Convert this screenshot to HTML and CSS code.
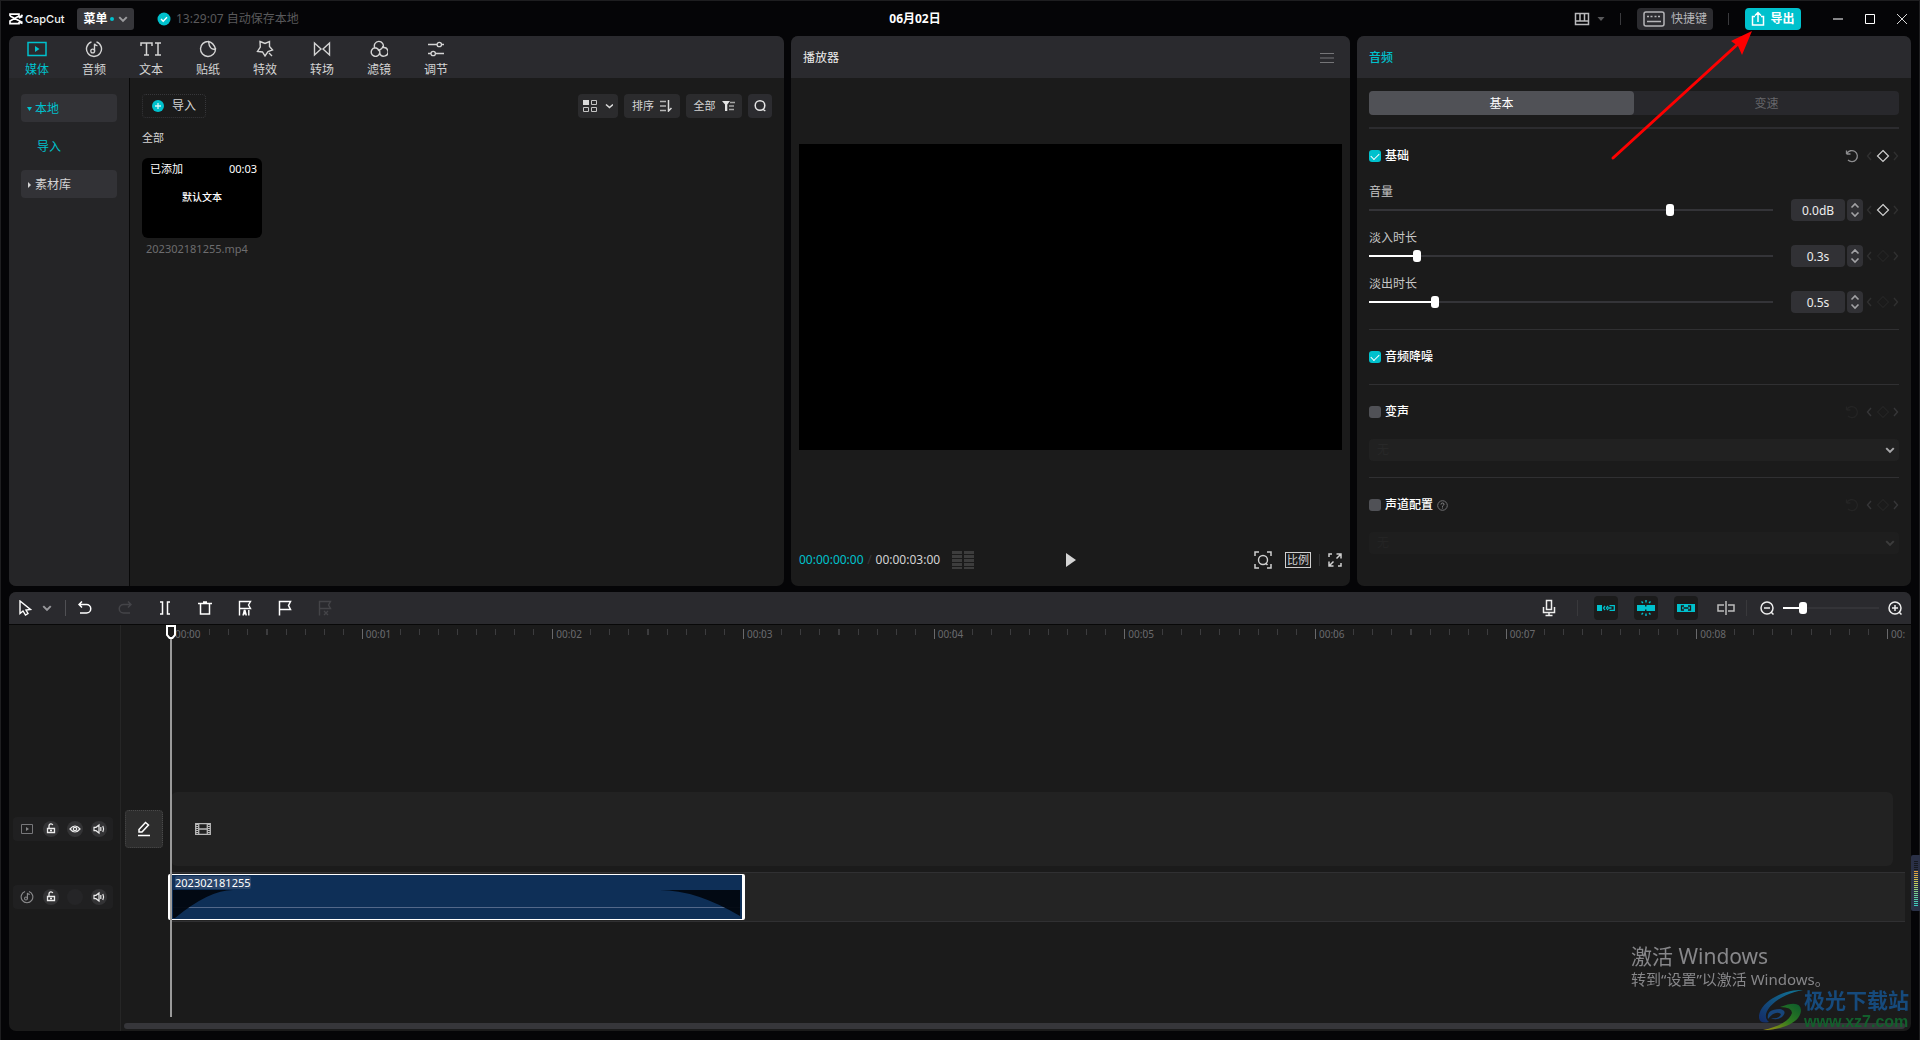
FILE: index.html
```html
<!DOCTYPE html>
<html lang="zh-CN">
<head>
<meta charset="utf-8">
<meta name="viewport" content="width=device-width, initial-scale=1">
<title>CapCut</title>
<link rel="stylesheet" href="styles.css">
</head>
<body>
<svg class="symbols" aria-hidden="true">
  <symbol id="chevron" viewBox="0 0 8 6"><path d="M1 1.5 4 4.5 7 1.5" fill="none" stroke="currentColor" stroke-width="1.6"/></symbol>
  <symbol id="keys" viewBox="0 0 36 16">
    <path class="kf-arrow" d="M8 4 4.500 8 8 12M31 4l3.500 4L31 12" fill="none" stroke-width="1.4"/>
    <path class="kf-diamond" d="M20 2.500 25.500 8 20 13.500 14.500 8Z" fill="none" stroke-width="1.2"/>
  </symbol>
  <symbol id="reset" viewBox="0 0 14 14"><path d="M1.500 5H5.500M1.500 1.500v3.500M2 4.500A5.500 5.500 0 1 1 3 11" fill="none" stroke="currentColor" stroke-width="1.300"/></symbol>
  <symbol id="spin" viewBox="0 0 16 22"><path d="M4.500 8.500 8 5l3.500 3.500M4.500 13.500 8 17l3.500-3.500" fill="none" stroke="#a2a2a5" stroke-width="1.600"/></symbol>
  <symbol id="lock" viewBox="0 0 16 16"><path d="M4.500 7.500h7v4h-7zM6 7.500V4.800a2 2 0 0 1 3.800-.8M7 9.500h2" fill="none" stroke="#ececec" stroke-width="1.300"/></symbol>
  <symbol id="speaker" viewBox="0 0 16 16"><path d="M3 6.300h2L8 4v8L5 9.700H3zM9.800 6v4M11.800 5q1.600 3 0 6" fill="none" stroke="#ececec" stroke-width="1.200"/></symbol>
  <symbol id="note" viewBox="0 0 18 18"><path d="M11.500 1.900A7.500 7.500 0 1 1 6.500 1.900M9.500 11.500V3.800q1 2 3 1.800" fill="none" stroke="currentColor" stroke-width="1.400"/><circle cx="7.700" cy="11" r="1.900" fill="none" stroke="currentColor" stroke-width="1.300"/></symbol>
</svg>

<div class="app">
  <header class="titlebar">
    <div class="title-left">
      <svg class="logo" width="14" height="12" viewBox="0 0 14 12"><path d="M13.500 3.500 10 5 13.500 2M1 3V1.200h9V3L1 8v2.600h9V9M1 3l12.500 6.500M10 9l3.500 1.500" fill="none" stroke="#fff" stroke-width="1.700"/></svg>
      <span class="brand">CapCut</span>
      <button class="menu-btn" type="button">菜单<i class="dot"></i><svg width="10" height="8"><use href="#chevron"/></svg></button>
      <svg class="saved" width="14" height="14" viewBox="0 0 14 14"><circle cx="7" cy="7" r="6.500" fill="#00c1cd"/><path d="M4 7l2.200 2.200L10 5.300" fill="none" stroke="#fff" stroke-width="1.400"/></svg>
      <span class="save-text">13:29:07 自动保存本地</span>
    </div>
    <h1 class="project">06月02日</h1>
    <div class="title-right">
      <button class="layout-btn" type="button" aria-label="布局">
        <svg width="32" height="14" viewBox="0 0 32 14"><path d="M2.500 1.500h13v11h-13zM2.500 9h13M7 2v7M11.500 2v7" fill="none" stroke="#b9b9bb" stroke-width="1.500"/><path d="M24.500 5h7L28 9z" fill="#58585a"/></svg>
      </button>
      <i class="vline"></i>
      <button class="keys-btn" type="button"><svg width="22" height="16" viewBox="0 0 22 16"><rect x="1" y="1" width="20" height="14" rx="2" fill="none" stroke="#b5b5b8" stroke-width="1.500"/><path d="M4 5.500h2m1.500 0h2m2 0h2m1.500 0h2M4 10.500h14" stroke="#b5b5b8" stroke-width="1.500"/></svg>快捷键</button>
      <i class="vline"></i>
      <button class="export-btn" type="button"><svg width="14" height="16" viewBox="0 0 14 16"><path d="M4 5.500H1.500v8.500h11V5.500H10M7 11V2M4 4.500l3-3 3 3" fill="none" stroke="#fff" stroke-width="1.500"/></svg>导出</button>
      <div class="win">
        <button type="button" aria-label="最小化"><svg width="12" height="12"><path d="M1 6h10" stroke="#858587" stroke-width="2"/></svg></button>
        <button type="button" aria-label="最大化"><svg width="12" height="12"><path d="M1.500 1.500h9v9h-9z" fill="none" stroke="#fff"/></svg></button>
        <button type="button" aria-label="关闭"><svg width="12" height="12"><path d="M1 1l10 10M11 1 1 11" stroke="#d8d8d8"/></svg></button>
      </div>
    </div>
  </header>

  <main class="panels">
    <section class="panel media">
      <nav class="panel-head tabs">
        <button class="tab on" type="button"><svg width="20" height="18" viewBox="0 0 20 18"><path d="M1 2.500h18v13H1z" fill="none" stroke="currentColor" stroke-width="1.500"/><path d="M8 6l4.500 3L8 12z" fill="currentColor"/></svg>媒体</button>
        <button class="tab" type="button"><svg width="18" height="18"><use href="#note"/></svg>音频</button>
        <button class="tab" type="button"><svg width="22" height="18" viewBox="0 0 22 18"><path d="M1 6V3h11v3M6.500 3v12M4 15h5M15 3h6M15 15h6M18 3v12" fill="none" stroke="currentColor" stroke-width="1.500"/></svg>文本</button>
        <button class="tab" type="button"><svg width="18" height="18" viewBox="0 0 18 18"><path d="M9.500 1.500A7.500 7.500 0 1 0 16.500 9q-6 1.500-7-7.500 5 1 7 7.500" fill="none" stroke="currentColor" stroke-width="1.400"/></svg>贴纸</button>
        <button class="tab" type="button"><svg width="18" height="18" viewBox="0 0 18 18"><path d="M4 1.500l5 2 4.500-2v5l3 3.500-4.500 1.500-3 4.500-2.500-4-5-.5 2.800-4.500zM13 13l3 3" fill="none" stroke="currentColor" stroke-width="1.400"/></svg>特效</button>
        <button class="tab" type="button"><svg width="18" height="18" viewBox="0 0 18 18"><path d="M1.500 3v12L8 9zM16.500 3v12L10 9z" fill="none" stroke="currentColor" stroke-width="1.400"/></svg>转场</button>
        <button class="tab" type="button"><svg width="18" height="18" viewBox="0 0 18 18"><path d="M4.800 7.800A4.500 4.500 0 1 1 13 7.600M13 7.600A4.300 4.300 0 1 1 9.800 13.500M9 9.500A4.300 4.300 0 1 1 4.800 7.800Q8 7.800 9 11M13 6q-.5 3-3.500 4" fill="none" stroke="currentColor" stroke-width="1.400"/></svg>滤镜</button>
        <button class="tab" type="button"><svg width="18" height="18" viewBox="0 0 18 18"><path d="M1 4.500h9M14.500 4.500H17M1 13.500h3M8.500 13.500H17" stroke="currentColor" stroke-width="1.400"/><circle cx="12.300" cy="4.500" r="2.200" fill="none" stroke="currentColor" stroke-width="1.300"/><circle cx="6.200" cy="13.500" r="2.200" fill="none" stroke="currentColor" stroke-width="1.300"/></svg>调节</button>
      </nav>
      <div class="media-body">
        <aside class="side">
          <button class="side-item on" type="button"><svg width="6" height="6"><path d="M0 1h5L2.500 5z" fill="currentColor"/></svg>本地</button>
          <button class="side-sub" type="button">导入</button>
          <button class="side-item" type="button"><svg width="6" height="6"><path d="M1 0v6l3-3z" fill="currentColor"/></svg>素材库</button>
        </aside>
        <div class="library">
          <div class="lib-bar">
            <button class="import-btn" type="button"><svg width="12" height="12"><circle cx="6" cy="6" r="6" fill="#00c1cd"/><path d="M3 6h6M6 3v6" stroke="#d8f6f8" stroke-width="1.300"/></svg>导入</button>
            <div class="filters">
              <button class="chip" type="button" aria-label="视图"><svg width="30" height="14" viewBox="0 0 30 14"><path d="M0 1h6v5H0z" fill="#dadada"/><path d="M8.500 1.500h5v4h-5zM.5 8.500h5v4h-5zM8.500 8.500h5v4h-5z" fill="none" stroke="#c5c5c5"/><path d="M23 5.500l3.500 3 3.500-3" fill="none" stroke="#dadada" stroke-width="1.600"/></svg></button>
              <button class="chip wide" type="button">排序<svg width="12" height="12"><path d="M0 1.500h6M0 6h6M0 10.500h6" stroke="#b5b5b5" stroke-width="1.500"/><path d="M8.500 0v11l3-3" fill="none" stroke="#dadada" stroke-width="1.500"/></svg></button>
              <button class="chip wide" type="button">全部<svg width="13" height="12"><path d="M0 1h8L5.300 4.500V11H3V4.500z" fill="#e4e4e4"/><path d="M8 2.500h5M7 6h5M7 9.500h5" stroke="#a5a5a5" stroke-width="1.500"/></svg></button>
              <button class="chip search" type="button" aria-label="搜索"><svg width="14" height="14"><circle cx="7" cy="6.500" r="4.800" fill="none" stroke="#e4e4e4" stroke-width="1.500"/><path d="M9.500 10l2.800 2" stroke="#e4e4e4" stroke-width="1.500"/></svg></button>
            </div>
          </div>
          <h2 class="lib-title">全部</h2>
          <figure class="clip-card">
            <div class="thumb"><div class="thumb-top"><span>已添加</span><time>00:03</time></div><b>默认文本</b></div>
            <figcaption>202302181255.mp4</figcaption>
          </figure>
        </div>
      </div>
    </section>

    <section class="panel player">
      <div class="panel-head player-head"><h2>播放器</h2><button type="button" aria-label="菜单"><svg width="14" height="12"><path d="M0 1.500h14M0 6h14M0 10.500h14" stroke="#757578"/></svg></button></div>
      <div class="stage"><div class="screen"></div></div>
      <div class="controls">
        <div class="times"><time class="now">00:00:00:00</time><i>/</i><time>00:00:03:00</time>
          <svg width="22" height="18"><path d="M5 0v18M17 0v18" stroke="#3d3d3d" stroke-width="10" stroke-dasharray="3 1"/></svg></div>
        <button type="button" aria-label="播放"><svg width="10" height="14"><path d="M0 0v14l10-7z" fill="#d4d4d4"/></svg></button>
        <div class="view">
          <button type="button" aria-label="缩放"><svg width="18" height="18"><path d="M1 5V1h4M13 1h4v4M17 13v4h-4M5 17H1v-4M11.500 12l2 2" fill="none" stroke="#d0d0d0" stroke-width="1.500"/><circle cx="9" cy="9" r="4.500" fill="none" stroke="#d0d0d0" stroke-width="1.400"/></svg></button>
          <button class="ratio" type="button">比例</button>
          <i class="vline"></i>
          <button type="button" aria-label="全屏"><svg width="14" height="14"><path d="M1 4V1h3M8.500 1H13v4.500M13 10v3h-3M5.500 13H1V8.500M8.500 5.500 13 1M5.500 8.500 1 13" fill="none" stroke="#d0d0d0" stroke-width="1.500"/></svg></button>
        </div>
      </div>
    </section>

    <section class="panel inspector">
      <div class="panel-head"><h2>音频</h2></div>
      <div class="props">
        <div class="segment"><button class="on" type="button">基本</button><button type="button">变速</button></div>
        <section class="group first">
          <div class="row"><label class="check"><input type="checkbox" checked>基础</label>
            <button class="reset" type="button" aria-label="重置"><svg width="14" height="14"><use href="#reset"/></svg></button><svg class="kf active" width="36" height="16"><use href="#keys"/></svg></div>
          <label class="name" for="vol">音量</label>
          <div class="control"><input class="range" id="vol" type="range" min="0" max="1000" value="750"><input class="num" type="text" value="0.0dB" aria-label="音量值"><button class="step" type="button" aria-label="增减"><svg width="16" height="22"><use href="#spin"/></svg></button><svg class="kf active" width="36" height="16"><use href="#keys"/></svg></div>
          <label class="name" for="fin">淡入时长</label>
          <div class="control"><input class="range" id="fin" type="range" min="0" max="1000" value="111" style="--fill:12%"><input class="num" type="text" value="0.3s" aria-label="淡入值"><button class="step" type="button" aria-label="增减"><svg width="16" height="22"><use href="#spin"/></svg></button><svg class="kf" width="36" height="16"><use href="#keys"/></svg></div>
          <label class="name" for="fout">淡出时长</label>
          <div class="control"><input class="range" id="fout" type="range" min="0" max="1000" value="157" style="--fill:16%"><input class="num" type="text" value="0.5s" aria-label="淡出值"><button class="step" type="button" aria-label="增减"><svg width="16" height="22"><use href="#spin"/></svg></button><svg class="kf" width="36" height="16"><use href="#keys"/></svg></div>
        </section>
        <section class="group slim">
          <div class="row"><label class="check"><input type="checkbox" checked>音频降噪</label></div>
        </section>
        <section class="group">
          <div class="row"><label class="check"><input type="checkbox">变声</label><svg class="reset off" width="14" height="14"><use href="#reset"/></svg><svg class="kf dim" width="36" height="16"><use href="#keys"/></svg></div>
          <div class="pick"><select aria-label="变声" disabled><option>无</option></select><svg width="10" height="8"><use href="#chevron"/></svg></div>
        </section>
        <section class="group">
          <div class="row"><label class="check"><input type="checkbox">声道配置</label>
            <svg class="help" width="11" height="11"><circle cx="5.500" cy="5.500" r="4.800" fill="none" stroke="#707072"/><path d="M4 4.500q0-1.500 1.500-1.500T7 4.300Q7 5 5.500 6v.8M5.500 7.500v1" fill="none" stroke="#858587"/></svg>
            <svg class="reset off" width="14" height="14"><use href="#reset"/></svg><svg class="kf dim" width="36" height="16"><use href="#keys"/></svg></div>
          <div class="pick faint"><select aria-label="声道配置" disabled><option>无</option></select><svg width="10" height="8"><use href="#chevron"/></svg></div>
        </section>
      </div>
    </section>
  </main>

  <section class="panel timeline">
    <div class="toolbar">
      <div class="tools">
        <button class="narrow" type="button" aria-label="选择"><svg width="14" height="16"><path d="M2 1v12.500l3-2.500 2.500 4 2.500-1.500-2-3.500 4.500-.5z" fill="none" stroke="#fff" stroke-width="1.400"/></svg></button>
        <button class="caret" type="button" aria-label="更多"><svg width="10" height="8"><use href="#chevron"/></svg></button>
        <i class="vline"></i>
        <button type="button" aria-label="撤销"><svg width="14" height="14"><path d="M4 .5 1 3.500l3 3M1 3.500h7.500a4.200 4.200 0 0 1 0 8.500H2" fill="none" stroke="#fff" stroke-width="1.500"/></svg></button>
        <button class="off" type="button" aria-label="恢复"><svg width="14" height="14"><path d="M10 .5l3 3-3 3M13 3.500H5.500a4.200 4.200 0 0 0 0 8.500H12" fill="none" stroke="currentColor" stroke-width="1.500"/></svg></button>
        <button type="button" aria-label="分割"><svg width="12" height="14"><path d="M1 1h2.500v12H1M11 1H8.500v12H11" fill="none" stroke="#fff" stroke-width="1.500"/></svg></button>
        <button type="button" aria-label="删除"><svg width="14" height="14"><path d="M0 2.500h14M5 1h4M2.500 2.500v10.500h9V2.500" fill="none" stroke="#fff" stroke-width="1.500"/></svg></button>
        <button type="button" aria-label="智能标记"><svg width="14" height="16" viewBox="0 0 14 16"><path d="M1.500 15.500V1.500h11L10.500 5l2 3.500h-11M5 15.500l1.300-5H7l1.300 5M5.500 13.700h2.300M10.800 10v5.500" fill="none" stroke="#fff" stroke-width="1.400"/></svg></button>
        <button type="button" aria-label="标记"><svg width="14" height="16"><path d="M1.500 15.500V1.500h11L10.500 5.500l2 4h-11" fill="none" stroke="#fff" stroke-width="1.500"/></svg></button>
        <button class="off" type="button" aria-label="清除标记"><svg width="14" height="16"><path d="M1.500 15.500V1.500h11L10.500 5l2 3.500h-11M6 11l4 4M10 11l-4 4" fill="none" stroke="currentColor" stroke-width="1.400"/></svg></button>
      </div>
      <div class="tools-right">
        <button type="button" aria-label="录音"><svg width="14" height="18"><path d="M4.500 1.500h5v9h-5zM1.500 8v5.500h11V8M7 13.500V16M3.500 16.500h7" fill="none" stroke="#eee" stroke-width="1.500"/></svg></button>
        <i class="vline"></i>
        <button class="toggle" type="button" aria-label="主轨磁吸"><svg width="18" height="8"><path d="M0 1h5v6H0z" fill="#00c1cd"/><path d="M12.500 1.700h4.800v4.600h-4.800M8 2 6.500 4 8 6M11 2 9.500 4 11 6M11 4h3.500" fill="none" stroke="#00c1cd" stroke-width="1.300"/></svg></button>
        <button class="toggle" type="button" aria-label="自动吸附"><svg width="18" height="18"><path d="M0 6h8v6H0zM9.500 6H18v6H9.500zM8 7.500h2v3H8z" fill="#00c1cd"/><path d="M9 1v2.500M9 14.500V17M4.500 2.500 6 4M13.500 2.500 12 4M4.500 15.500 6 14M13.500 15.500 12 14" stroke="#00c1cd" stroke-width="1.400"/></svg></button>
        <button class="toggle" type="button" aria-label="联动"><svg width="18" height="8"><path d="M0 0h18v8H0z" fill="#00c1cd"/><path d="M7 2H4.500v4H7M11 2h2.500v4H11M6.500 4h5" fill="none" stroke="#1b1b1b" stroke-width="1.300"/></svg></button>
        <button class="preview" type="button" aria-label="预览轴"><svg width="18" height="14"><path d="M7 4H1v6h6M11 4h6v6h-6M9 0v14" fill="none" stroke="#bdbdbd" stroke-width="1.500"/></svg></button>
        <i class="vline"></i>
        <button class="zoom" type="button" aria-label="缩小"><svg width="14" height="14"><circle cx="7" cy="7" r="6" fill="none" stroke="#eee" stroke-width="1.500"/><path d="M4 7h6M11 11l2.500 2.500" stroke="#eee" stroke-width="1.500"/></svg></button>
        <input class="range zoom-range" type="range" min="0" max="1000" value="182" style="--fill:20%" aria-label="时间线缩放">
        <button class="zoom" type="button" aria-label="放大"><svg width="14" height="14"><circle cx="7" cy="7" r="6" fill="none" stroke="#eee" stroke-width="1.500"/><path d="M4 7h6M7 4v6M11 11l2.500 2.500" stroke="#eee" stroke-width="1.500"/></svg></button>
      </div>
    </div>
    <div class="tracks">
      <div class="gutter"></div>
      <div class="ruler"><span>00:00</span><span>00:01</span><span>00:02</span><span>00:03</span><span>00:04</span><span>00:05</span><span>00:06</span><span>00:07</span><span>00:08</span><span>00:</span></div>
      <div class="head main-row">
        <svg width="12" height="10"><path d="M.5.5h11v9H.5z" fill="none" stroke="#77777a"/><path d="M5 3l3 2-3 2z" fill="#858588"/></svg>
        <button type="button" aria-label="锁定"><svg width="16" height="16"><use href="#lock"/></svg></button>
        <button type="button" aria-label="显示"><svg width="16" height="16"><path d="M3 8q5-6 10 0-5 6-10 0z" fill="none" stroke="#ececec" stroke-width="1.200"/><circle cx="8" cy="8" r="1.700" fill="none" stroke="#ececec" stroke-width="1.200"/></svg></button>
        <button type="button" aria-label="静音"><svg width="16" height="16"><use href="#speaker"/></svg></button>
      </div>
      <button class="cover main-row" type="button" aria-label="封面"><svg width="14" height="16"><path d="M2 8.500 8.500 1.500l3 2.500-6.500 7H2zM1 14.500h12" fill="none" stroke="#fff" stroke-width="1.500"/></svg></button>
      <div class="lane main-lane main-row"><svg width="16" height="12"><path d="M.7.7h14.600v10.600H.7zM3.700 1v10M12.300 1v10M4 6h8" fill="none" stroke="#b9b9b9" stroke-width="1.300"/><path d="M2 1v10M14 1v10" stroke="#b9b9b9" stroke-width="2" stroke-dasharray="1 1"/></svg></div>
      <div class="head audio-row">
        <svg class="dimnote" width="14" height="14"><use href="#note"/></svg>
        <button type="button" aria-label="锁定"><svg width="16" height="16"><use href="#lock"/></svg></button>
        <i class="blank"></i>
        <button type="button" aria-label="静音"><svg width="16" height="16"><use href="#speaker"/></svg></button>
      </div>
      <div class="lane audio-lane audio-row">
        <div class="clip"><span>202302181255</span>
          <div class="wave">
            <svg width="62" height="28" viewBox="0 0 62 28"><path d="M0 0h60Q36 0 2 28H0z" fill="#020810"/></svg>
            <svg width="80" height="28" viewBox="0 0 80 28"><path d="M80 0H0q36 0 80 26z" fill="#020810"/></svg>
          </div>
        </div>
      </div>
      <div class="scroll"></div>
      <div class="playhead"><svg width="10" height="15"><path d="M1 1h8v9l-2.500 3h-3L1 10z" fill="#1b1b1b" stroke="#fff" stroke-width="2"/></svg></div>
    </div>
  </section>
</div>

<div class="activate"><p>激活 Windows</p><p class="small">转到“设置”以激活 Windows。</p></div>
<div class="site">
  <svg width="46" height="42" viewBox="0 0 46 42">
    <defs><linearGradient id="blue" x1="1" y1="0" x2="0" y2="1"><stop offset="0" stop-color="#117a99"/><stop offset="1" stop-color="#142a66"/></linearGradient><linearGradient id="green" x1="1" y1="0" x2="0" y2="1"><stop offset="0" stop-color="#0b5a2c"/><stop offset=".5" stop-color="#2f7a20"/><stop offset="1" stop-color="#a89412"/></linearGradient></defs>
    <path d="M45 1C25 0 0 14 1 29q1 6 10 4C0 24 20 5 45 1z" fill="url(#blue)"/>
    <path d="M22 18q20-8 21 3c0 12-18 20-38 20 16-3 27-10 29-17q0-6-12-6z" fill="url(#green)"/>
    <path d="M10 30Q8 20 22 20q8 2 2 8-6 4-11 1 9 1 10-4-6-4-13 5z" fill="#17457a"/>
  </svg>
  <div><b>极光下载站</b><span>www.xz7.com</span></div>
</div>
<div class="level"><i></i></div>
<svg class="pointer" width="144" height="132" viewBox="0 0 144 132"><path d="M4 129 130 14" stroke="#fe0000" stroke-width="3" stroke-linecap="round"/><path d="M143 2 133 26 129 17 122 12z" fill="#fe0000"/></svg>
</body>
</html>
```
FILE: styles.css
```css
* { box-sizing: border-box; }
body {
  margin: 0;
  background: #050507;
  color: #d4d4d4;
  font: 12px/16px "Noto Sans", "Noto Sans CJK SC", sans-serif;
  overflow: hidden;
}
button, input, select { font: inherit; color: inherit; margin: 0; padding: 0; border: 0; background: none; }
button { display: flex; align-items: center; justify-content: center; }
h1, h2, p, figure { margin: 0; font-size: inherit; font-weight: 400; }
i { font-style: normal; }
svg { display: block; flex: none; }
.symbols { position: absolute; width: 0; height: 0; }

.app {
  min-height: 100vh;
  display: grid;
  grid-template-rows: 36px minmax(550px, 550fr) minmax(300px, 445fr);
  padding: 0 9px 9px;
  box-shadow: inset 1px 1px #1e1e20, inset -1px 0 #1e1e20;
}

/* title bar */
.titlebar { display: grid; grid-template-columns: 871fr 70px 961fr; align-items: center; padding-top: 1px; }
.title-left, .title-right { display: flex; align-items: center; }
.brand { font: 500 11px/16px Inter, sans-serif; color: #f2f2f2; margin-left: 2px; width: 52px; }
.menu-btn { width: 57px; height: 22px; background: #36363a; border-radius: 3px; font-weight: 700; color: #fff; gap: 2px; }
.menu-btn svg { color: #9b9b9e; margin-left: 2px; }
.dot { width: 4px; height: 4px; border-radius: 50%; background: #00c1cd; }
.saved { margin: 0 5px 0 23px; }
.save-text { color: #59595b; }
.project { font-weight: 700; color: #fff; text-align: center; }
.title-right { justify-content: flex-end; margin-right: -7px; }
.vline { width: 1px; height: 12px; background: #3a3a3d; }
.title-right .vline { margin: 0 16px 0 15px; }
.keys-btn { width: 76px; height: 22px; background: #2c2c30; border-radius: 4px; gap: 6px; color: #b5b5b8; }
.export-btn { width: 56px; height: 22px; background: #00c1cd; border-radius: 4px; gap: 5px; color: #fff; font-weight: 700; }
.win { display: flex; margin-left: 21px; }
.win button { width: 32px; height: 24px; }

/* panels */
.panels { display: grid; grid-template-columns: 775fr 559fr 554fr; gap: 7px; }
.panel { background: #1b1b1b; border-radius: 7px; overflow: hidden; min-width: 0; display: flex; flex-direction: column; }
.panel-head { height: 42px; background: #2a2a2e; display: flex; align-items: center; flex: none; padding-top: 2px; }
.panel-head.tabs { padding: 0; }
.tab { width: 56px; margin-right: 1px; height: 42px; flex-direction: column; line-height: 18px; padding-top: 4px; gap: 3px; }
.on { color: #00c1cd; }

.media-body { flex: 1; display: grid; grid-template-columns: 121px 1fr; }
.side { background: #252527; border-right: 1px solid #080808; padding: 16px 12px; display: flex; flex-direction: column; gap: 10px; }
.side-item { height: 28px; border-radius: 4px; background: #323236; justify-content: flex-start; padding: 2px 0 0 6px; gap: 2px; }
.side-sub { height: 28px; justify-content: flex-start; padding: 2px 0 0 16px; color: #00c1cd; }
.library { padding: 16px 12px; }
.lib-bar { display: flex; justify-content: space-between; }
.import-btn { width: 64px; height: 24px; border: 1px dotted #37373a; border-radius: 4px; gap: 8px; }
.filters { display: flex; gap: 6px; font-size: 11px; }
.chip { width: 40px; height: 24px; border-radius: 4px; background: #2b2b2d; gap: 6px; }
.chip.wide { width: 56px; }
.chip.search { width: 24px; background: #2c2c30; }
.lib-title { font-size: 11px; margin: 12px 0; }
.clip-card { width: 120px; font-size: 11px; }
.thumb { height: 80px; border-radius: 6px; background: #000; color: #fff; text-align: center; }
.thumb-top { display: flex; justify-content: space-between; padding: 3px 5px 0 8px; }
.thumb b { display: block; margin-top: 12px; font-size: 10px; line-height: 16px; font-weight: 500; }
.clip-card figcaption { padding: 3px 4px; color: #6d6d6f; }

/* player */
.player-head { justify-content: space-between; padding-left: 12px; padding-right: 16px; color: #ededed; }
.stage { flex: 1; display: flex; align-items: center; padding: 0 8px; }
.screen { width: 100%; aspect-ratio: 16 / 9; background: #000; }
.controls { height: 70px; padding: 18px 8px 0; display: grid; grid-template-columns: 1fr auto 1fr; align-items: center; }
.times { display: flex; align-items: center; }
.times i { width: 12px; text-align: center; color: #38383a; }
.times .now { color: #00c1cd; }
.times svg { margin-left: 12px; }
.view { display: flex; justify-content: flex-end; align-items: center; gap: 8px; }
.view .vline { background: #303032; }
.ratio { width: 26px; height: 16px; border: 1px solid #d0d0d0; font-size: 11px; line-height: 14px; margin-left: 5px; }

/* inspector */
.inspector .panel-head { padding-left: 12px; color: #00c1cd; }
.inspector h2 { font-weight: 500; }
.props { padding: 13px 12px 0; }
.segment { display: grid; grid-template-columns: 1fr 1fr; height: 24px; border-radius: 4px; background: #28282c; color: #66666a; margin-bottom: 12px; }
.segment button { padding-top: 1px; }
.segment button.on { background: #505156; color: #fff; border-radius: 4px; }
.group { border-top: 1px solid #303032; padding-bottom: 16px; }
.group.first { border-top-width: 2px; border-color: #2c2c2f; }
.group.slim { padding-bottom: 0; }
.row { height: 54px; display: flex; align-items: center; }
.check { display: flex; align-items: center; gap: 4px; color: #fff; font-weight: 500; }
.check input { appearance: none; width: 12px; height: 12px; border-radius: 3px; background: #505156; display: grid; place-items: center; }
.check input:checked { background: #00c1cd; }
.check input:checked::after { content: ""; width: 7px; height: 4px; border: solid #fff; border-width: 0 0 1px 1px; rotate: -45deg; translate: 0 -1px; }
.reset { margin-left: auto; margin-right: 4px; color: #8c8c8e; }
.reset.off { color: #242424; }
.help { margin-left: 4px; }
.kf { --arrow: #303030; --diamond: #242424; }
.kf.active { --arrow: #303030; --diamond: #cfcfcf; }
.kf.dim { --arrow: #363638; }
.kf-arrow { stroke: var(--arrow); }
.kf-diamond { stroke: var(--diamond); }
.name { display: block; height: 16px; line-height: 18px; color: #c6c6c6; }
.control { display: grid; grid-template-columns: 1fr 54px 18px 36px; align-items: center; height: 22px; margin-bottom: 8px; }
.control:last-child { margin-bottom: 0; }
.range { appearance: none; height: 12px; margin-right: 18px; min-width: 0; --fill: 0%;
  background: linear-gradient(to right, #fff var(--fill), #343438 var(--fill)) center / 100% 2px no-repeat; }
.range::-webkit-slider-thumb { appearance: none; width: 8px; height: 12px; border-radius: 3px; background: #fff; }
.num { width: 54px; height: 22px; border-radius: 4px; background: #313135; text-align: center; color: #ededed; }
.step { width: 16px; height: 22px; border-radius: 4px; background: #313135; margin-left: 2px; }
.pick { display: grid; align-items: center; height: 22px; }
.pick > * { grid-area: 1 / 1; }
.pick select { appearance: none; width: 100%; height: 22px; border-radius: 4px; background: #212121; color: #282828; padding-left: 8px; opacity: 1; }
.pick svg { justify-self: end; margin-right: 4px; color: #a8a8aa; }
.pick.faint select { background: #1e1e1e; color: #242424; }
.pick.faint svg { color: #3c3c3c; }

/* timeline */
.timeline { margin-top: 6px; }
.toolbar { height: 33px; background: #2a2a2e; border-bottom: 1px solid #080808; display: flex; justify-content: space-between; flex: none; }
.tools, .tools-right { display: flex; align-items: center; }
.tools { padding-left: 6px; }
.tools button { width: 40px; height: 24px; }
.tools .narrow { width: 20px; }
.tools .caret { width: 24px; color: #98989b; }
.tools .vline { background: #505054; height: 16px; margin-left: 6px; margin-right: -1px; }
.tools .off { color: #444448; }
.tools-right { padding-right: 6px; }
.tools-right button { width: 20px; height: 24px; }
.tools-right .vline { margin: 0 16px 0 18px; height: 16px; background: #39393c; }
.tools-right .toggle { width: 24px; background: #1b1b1b; border-radius: 4px; margin-right: 16px; }
.tools-right .preview { width: 24px; }
.tools-right .preview + .vline { margin: 0 10px 0 8px; }
.tools-right .zoom-range { width: 96px; margin: 0 6px; }

.tracks {
  flex: 1; position: relative; display: grid;
  grid-template-columns: 112px 50px 1fr;
  grid-template-rows: 20px 147fr 74px 6px 50px 101fr 8px;
  padding-right: 6px;
}
.gutter { grid-area: 1 / 1 / -1 / 2; border-right: 1px solid #262626; }
.ruler { grid-area: 1 / 3; display: grid; grid-template-columns: repeat(9, 1fr) 18px; padding-top: 2px; }
.ruler span {
  height: 18px; padding-left: 4px; font-size: 10px; line-height: 14px; color: #69696b;
  background: linear-gradient(#69696b, #69696b) 0 2px / 1px 10px no-repeat,
    repeating-linear-gradient(to right, #3c3c3e 0 1px, transparent 1px 10%) 0 2px / 100% 6px no-repeat;
}
.ruler span:last-child { background: linear-gradient(#69696b, #69696b) 0 2px / 1px 10px no-repeat; }
.main-row { grid-row: 3; }
.audio-row { grid-row: 5; }
.head { grid-column: 1; align-self: center; width: 100px; height: 24px; margin-left: 4px; border-radius: 4px; background: #202021; display: grid; grid-template-columns: repeat(4, 24px); place-items: center; padding: 0 2px; }
.head button, .blank { width: 16px; height: 16px; border-radius: 50%; background: #333335; }
.blank { background: #252527; }
.dimnote { color: #8a8a8c; }
.cover { grid-column: 2; align-self: center; width: 38px; height: 38px; margin-left: 4px; background: #2d2d2d; border: 1px dotted #4a4a4a; border-radius: 4px; }
.lane { grid-column: 3; }
.main-lane { background: #222; border-radius: 6px; margin-right: 12px; display: flex; align-items: center; padding-left: 24px; }
.audio-lane { position: relative; background: #242424; border: solid #303032; border-width: 1px 0; }
.clip { position: absolute; left: -3px; top: 1px; width: calc(33% + 5px); height: 46px; background: #0e2f57; border: solid #fff; border-width: 1px 3px; border-radius: 2px; padding: 0 2px; }
.clip span { display: block; width: 76px; margin: 1px 0 0 2px; height: 13px; line-height: 13px; font-size: 11px; background: #2a456a; color: #fff; border-radius: 2px; }
.wave { display: flex; justify-content: space-between; margin-top: 1px; background: linear-gradient(#53688a, #53688a) 0 17px / 100% 1px no-repeat; }
.wave svg { opacity: .95; }
.scroll { grid-area: 7 / 1 / 8 / 4; height: 6px; margin-left: 115px; background: #36363a; border-radius: 3px; }
.playhead { position: absolute; left: 161px; top: 0; bottom: 14px; width: 2px; background: #9a9a9a; }
.playhead svg { margin-left: -4px; }

/* overlays floating above the editor */
.activate { position: fixed; right: 89px; bottom: 50px; width: 200px; color: #87878a; font-size: 15px; line-height: 22px; white-space: nowrap; }
.activate p:first-child { font-size: 21px; line-height: 24px; }
.site { position: fixed; right: 11px; bottom: 8px; display: flex; align-items: center; white-space: nowrap; }
.site div { width: 105px; display: flex; flex-direction: column; }
.site b { font-size: 21px; line-height: 24px; color: #164a7c; }
.site span { font: 700 16px/20px "Liberation Sans", sans-serif; color: #12602c; }
.level { position: fixed; right: 0; top: 855px; width: 9px; height: 56px; background: #2a3046; border-radius: 2px 0 0 2px; padding: 6px 2px 5px 3px; }
.level i { display: block; height: 100%; background: repeating-linear-gradient(transparent 0 1px, #2a3046 1px 2px), linear-gradient(#15181f 22%, #e09a3a 22%, #c8cf5a 50%, #7ccf8c 70%, #38c9c0); }
.pointer { position: fixed; right: 167px; top: 29px; pointer-events: none; }
```
